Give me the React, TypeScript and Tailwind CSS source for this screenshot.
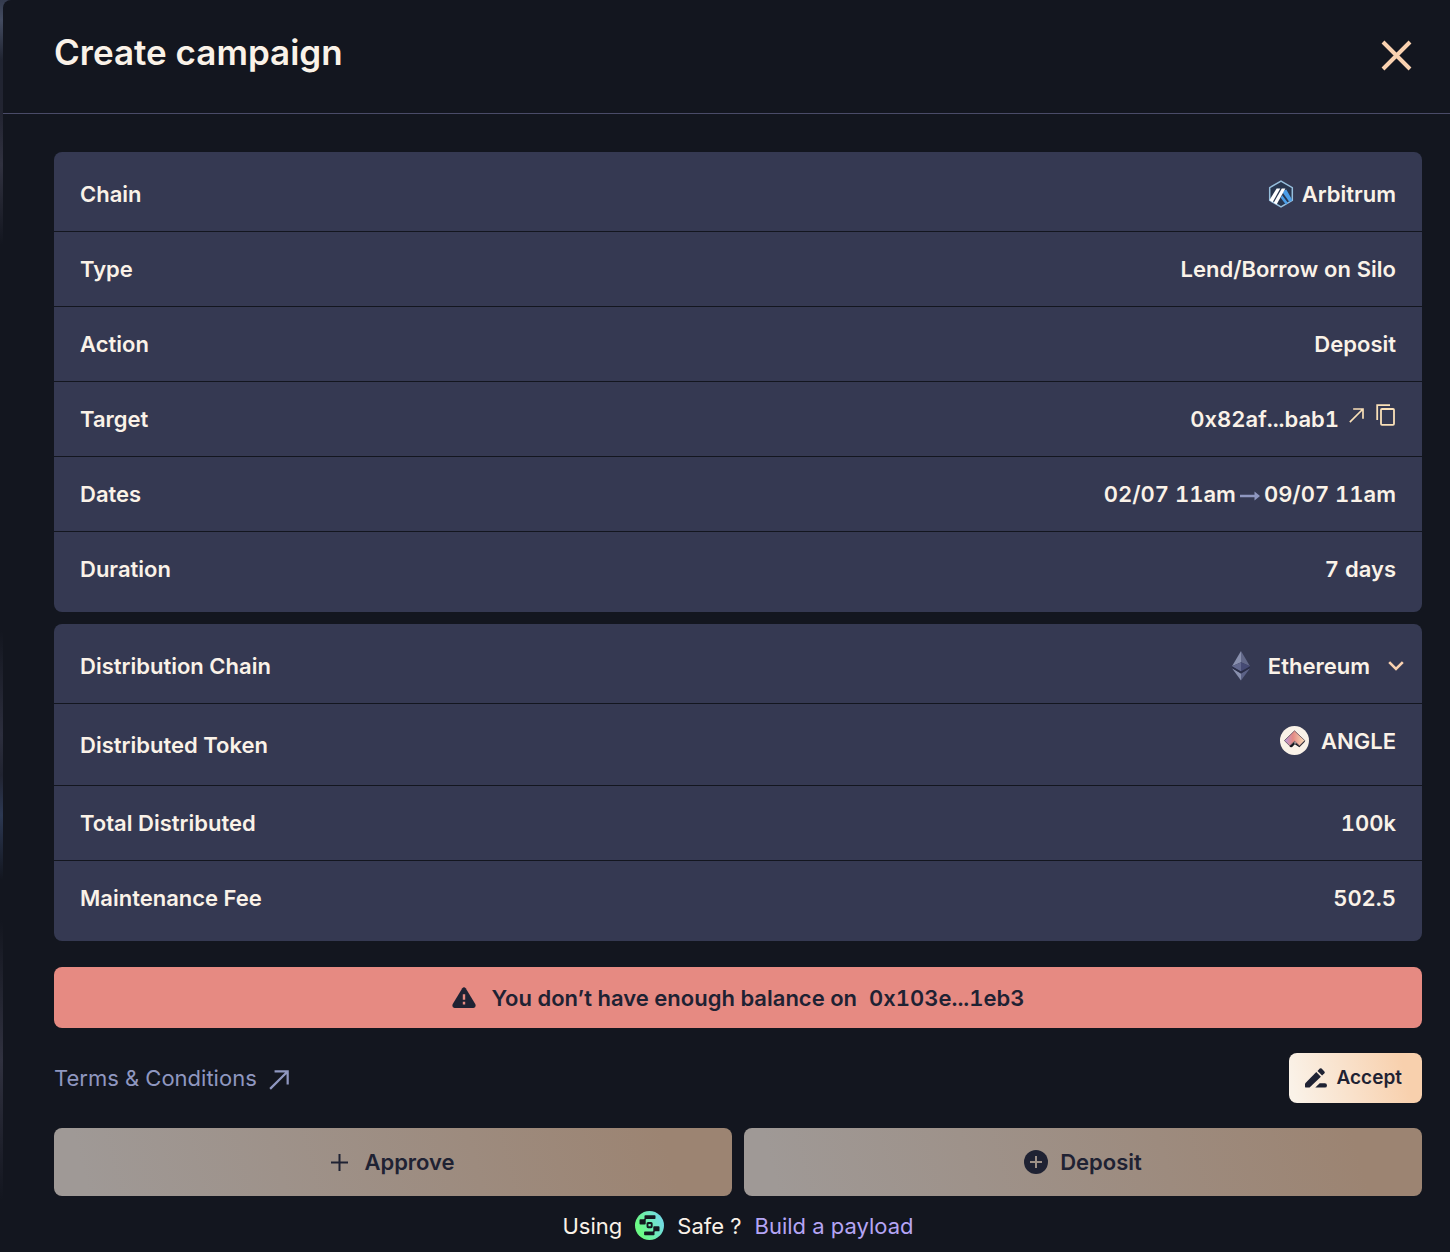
import type { ReactNode } from "react";

function Row({ label, children }: { label: string; children: ReactNode }) {
  return (
    <div className="flex min-h-[75px] items-center justify-between gap-4 border-b border-[#13161f] px-[26px] last:min-h-[74px] last:border-b-0">
      <dt>{label}</dt>
      <dd className="flex items-center tabular-nums">{children}</dd>
    </div>
  );
}

function Card({ children }: { children: ReactNode }) {
  return <dl className="rounded-lg bg-[#353952] pt-[5px] pb-[6px]">{children}</dl>;
}

function ArbitrumLogo() {
  return (
    <svg width="26" height="28" viewBox="0 0 26 28" aria-hidden="true">
      <path d="M13 1.2 24.3 7.6v12.8L13 26.8 1.7 20.4V7.6Z" fill="#28364f" stroke="#96bedc" strokeWidth="1.5" />
      <path d="M16.2 10.5 18.3 9.6 24 19.4v1.1l-2.6 1.5-6.6-9.2Z" fill="#4c9ee8" />
      <path d="M14.2 15.2 20 23.1l-2.2 1.3-5.1-6.7Z" fill="#4c9ee8" />
      <path d="M8.6 8.6h3.7L4.6 22.2 1.8 20.5v-1Z" fill="#fff" />
      <path d="M13.8 8.6h3.6L8.6 24.4 5.7 22.8Z" fill="#fff" />
    </svg>
  );
}

function EthereumLogo() {
  return (
    <svg width="18" height="30" viewBox="0 0 18 30" aria-hidden="true">
      <path d="M9 0v11.3L0 15.2Z" fill="#8990ae" />
      <path d="M9 0v11.3l9 3.9Z" fill="#626889" />
      <path d="M0 15.2 9 11.3v9.2Z" fill="#62688e" />
      <path d="M18 15.2 9 11.3v9.2Z" fill="#454a74" />
      <path d="M0 17.2 9 22.4V29.6Z" fill="#8990ae" />
      <path d="M18 17.2 9 22.4V29.6Z" fill="#5c6286" />
      <path d="M0 15.4 9 20.6l9-5.2v1.6L9 22.4 0 17Z" fill="#2a2e48" />
    </svg>
  );
}

function AngleLogo() {
  return (
    <svg width="29" height="29" viewBox="0 0 29 29" aria-hidden="true">
      <defs>
        <linearGradient id="angle" x1="4" y1="14" x2="25" y2="14" gradientUnits="userSpaceOnUse">
          <stop stopColor="#b49ae0" />
          <stop offset=".42" stopColor="#e48a84" />
          <stop offset="1" stopColor="#fae0b8" />
        </linearGradient>
      </defs>
      <circle cx="14.5" cy="14.5" r="14.5" fill="#faf2e8" />
      <path d="m9.800 19.300v1.600l1.600.3 3.100-3.200 4.900 3.200 5.400-5.400v-1.400Z" fill="#15171f" />
      <path d="M14.500 4.800 24.800 14.600l-5.300 5.300-5-4.700-4.700 4.700-5.400-5.300Z" fill="url(#angle)" stroke="#5a4d5c" strokeWidth=".8" />
      <path d="m9.800 20.300 4.700-4.900v3.200l-2.600 2.600Z" fill="#15171f" />
    </svg>
  );
}

function SafeLogo() {
  return (
    <svg width="29" height="29" viewBox="0 0 29 29" aria-hidden="true">
      <defs>
        <linearGradient id="safe" x1="5" y1="19" x2="26" y2="10" gradientUnits="userSpaceOnUse">
          <stop stopColor="#6bfa86" />
          <stop offset="1" stopColor="#72dce0" />
        </linearGradient>
      </defs>
      <circle cx="14.5" cy="14.5" r="14.5" fill="url(#safe)" />
      <g fill="#13161f">
        <path d="M9.500 5.100q0-.8.8-.8h9.400q.8 0 .8.800v2.200q0 .8-.8.8h-8.200q-.8 0-.8.800v3.600q0 .9-.9.900H5.400q-.9 0-.9-.9V9.200q0-.9.900-.9h3.300q.8 0 .8-.8Z" />
        <path d="M19.500 23.500q0 .8-.8.800H9.900q-.8 0-.8-.8v-2.200q0-.8.8-.8h7.600q.8 0 .8-.8v-3.600q0-.9.900-.9h4.400q.9 0 .9.900v3.300q0 .9-.9.900h-3.300q-.8 0-.8.800Z" />
      </g>
      <rect x="12.500" y="12" width="4.200" height="4.200" rx=".6" fill="none" stroke="#13161f" strokeWidth="1.900" />
    </svg>
  );
}

function DiagonalArrow({ size, width }: { size: number; width: number }) {
  return (
    <svg width={size} height={size} viewBox="0 0 18 18" fill="none" stroke="currentColor" strokeWidth={width} aria-hidden="true">
      <path d="M1 17 16.5 1.5M5 1.2h11.8V13" />
    </svg>
  );
}

export default function App() {
  return (
    <div className="min-h-screen bg-[linear-gradient(180deg,#343b4e_0px,#434b60_20px,#202431_60px,#222431_110px,#30313f_165px,#13161f_245px,#13161f_630px,#2c2e3d_735px,#212431_775px,#2c3852_815px,#13161f_880px,#13161f_920px,#30313f_1060px,#13161f_1200px)] pl-[3px] font-['Inter',sans-serif] text-[22px] leading-7 font-semibold text-[#faf2e8]">
      <main className="min-h-screen rounded-tl-lg bg-[#13161f]">
        <header className="flex h-[114px] items-start justify-between border-b border-[#4a4b68] pt-8 pr-[38px] pl-[51px]">
          <h1 className="text-[35px] leading-10">Create campaign</h1>
          <button type="button" aria-label="Close" className="mt-2 text-[#fad2b0]">
            <svg width="31" height="31" viewBox="0 0 31 31" stroke="currentColor" strokeWidth="4" aria-hidden="true">
              <path d="m2 2 27 27M29 2 2 29" />
            </svg>
          </button>
        </header>

        <div className="pt-[38px] pr-7 pl-[51px]">
          <Card>
            <Row label="Chain">
              <span className="flex items-center gap-2">
                <ArbitrumLogo />
                Arbitrum
              </span>
            </Row>
            <Row label="Type">Lend/Borrow on Silo</Row>
            <Row label="Action">Deposit</Row>
            <Row label="Target">
              0x82af...bab1
              <a href="#target" aria-label="Open address" className="mb-2 ml-[10px] text-[#fae0b8]">
                <DiagonalArrow size={15} width={2} />
              </a>
              <button type="button" aria-label="Copy address" className="mb-2 ml-3 text-[#fae0b8]">
                <svg width="20" height="22" viewBox="0 0 20 22" fill="none" stroke="currentColor" strokeWidth="1.8" aria-hidden="true">
                  <path d="M1.2 16V1.2H14" />
                  <rect x="5" y="5" width="13" height="15.8" rx="1" />
                </svg>
              </button>
            </Row>
            <Row label="Dates">
              02/07 11am
              <svg width="20" height="10" viewBox="0 0 20 10" fill="#8f97c0" className="mx-1 mt-1" aria-label="to" role="img">
                <path d="M0 3.700h14.500V.4L20 5l-5.500 4.600V6.300H0Z" />
              </svg>
              09/07 11am
            </Row>
            <Row label="Duration">7 days</Row>
          </Card>

          <div className="mt-3">
            <Card>
              <Row label="Distribution Chain">
                <label className="-mr-2 flex items-center">
                  <EthereumLogo />
                  <select aria-label="Distribution Chain" className="ml-[18px] cursor-pointer appearance-none bg-transparent [field-sizing:content]">
                    <option>Ethereum</option>
                  </select>
                  <svg width="16" height="10" viewBox="0 0 16 10" fill="none" stroke="#fad2b0" strokeWidth="2.600" className="pointer-events-none ml-[18px]" aria-hidden="true">
                    <path d="m1.200 1.200 6.800 6.800 6.800-6.800" />
                  </svg>
                </label>
              </Row>
              <div className="flex min-h-[82px] items-center justify-between gap-4 border-b border-[#13161f] px-[26px]">
                <dt>Distributed Token</dt>
                <dd className="mb-2 flex items-center gap-3">
                  <AngleLogo />
                  ANGLE
                </dd>
              </div>
              <Row label="Total Distributed">100k</Row>
              <Row label="Maintenance Fee">502.5</Row>
            </Card>
          </div>

          <div role="alert" className="mt-[26px] flex min-h-[61px] items-center justify-center rounded-lg bg-[#e68a82] text-[#1f2233]">
            <svg width="24" height="21" viewBox="0 0 24 21" aria-hidden="true">
              <path d="M10.300 1.200Q12-.8 13.700 1.200L23.400 17.300Q24.300 20.500 21.500 20.900H2.500Q-.3 20.500.6 17.300Z" fill="currentColor" />
              <path d="M12 7.200v5.600M12 14.800v2.800" stroke="#e68a82" strokeWidth="2.400" />
            </svg>
            <span className="ml-4">You don’t have enough balance on</span>
            <span className="ml-3 tabular-nums">0x103e...1eb3</span>
          </div>

          <div className="mt-[25px] flex items-center justify-between">
            <a href="#terms" className="flex items-center gap-3 font-normal text-[#8f97c0]">
              Terms &amp; Conditions
              <span className="mt-1">
                <DiagonalArrow size={20} width={2} />
              </span>
            </a>
            <button type="button" className="flex h-[50px] items-center gap-[10px] rounded-lg bg-linear-[75deg,#faf2e8_5%,#f8d0ad_85%] px-4 pr-5 text-[19px] text-[#1f2233]">
              <svg width="22" height="20" viewBox="0 0 22 20" fill="currentColor" aria-hidden="true">
                <path d="M0 15.400 11.300 4.100l4.600 4.600L4.600 19.600H1.200Q0 19.600 0 18.400Z" />
                <path d="M12.500 2.900 14.800.6q.9-.8 1.800 0l2.800 2.800q.8.9 0 1.800l-2.300 2.300Z" />
                <path d="m10.300 19.600 4.400-4.400h5.100q2.200 0 2.200 2.200t-2.200 2.200Z" />
              </svg>
              Accept
            </button>
          </div>

          <div className="mt-[25px] grid grid-cols-2 gap-3">
            <button type="button" disabled className="flex h-[68px] items-center justify-center gap-4 rounded-lg bg-linear-[75deg,#9f9996_5%,#9c8472_90%] text-[#1f2233]">
              <svg width="17" height="17" viewBox="0 0 17 17" stroke="currentColor" strokeWidth="2" aria-hidden="true">
                <path d="M8.500 0v17M0 8.500h17" />
              </svg>
              Approve
            </button>
            <button type="button" disabled className="flex h-[68px] items-center justify-center gap-3 rounded-lg bg-linear-[75deg,#9f9996_5%,#9c8472_90%] text-[#1f2233]">
              <svg width="24" height="24" viewBox="0 0 24 24" aria-hidden="true">
                <circle cx="12" cy="12" r="12" fill="currentColor" />
                <path d="M12 6v12M6 12h12" stroke="#9d9087" strokeWidth="2" />
              </svg>
              Deposit
            </button>
          </div>

          <p className="mt-[15px] flex items-center justify-center gap-[13px] font-normal">
            Using
            <SafeLogo />
            <span>Safe ?</span>
            <a href="#payload" className="text-[#b5a5f5]">
              Build a payload
            </a>
          </p>
        </div>
      </main>
    </div>
  );
}
